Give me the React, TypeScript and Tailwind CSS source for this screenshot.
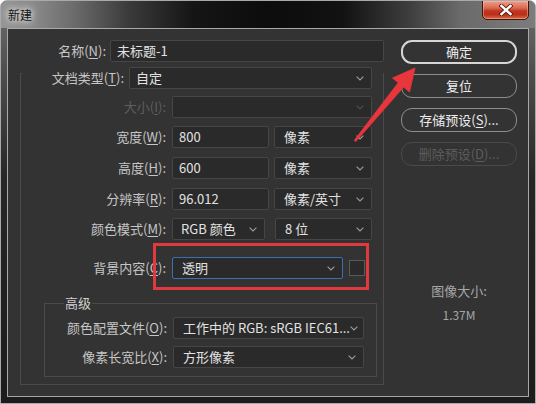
import React from "react";

const Chevron = ({ color = "#9c9c9c" }: { color?: string }) => (
  <svg width="8" height="5" viewBox="0 0 8 5" className="shrink-0">
    <path d="M0.6 0.6 L4 4 L7.4 0.6" fill="none" stroke={color} strokeWidth="1.1" />
  </svg>
);

function Field({
  className = "",
  children,
  chevron = false,
  disabled = false,
  blue = false,
}: {
  className?: string;
  children?: React.ReactNode;
  chevron?: boolean;
  disabled?: boolean;
  blue?: boolean;
}) {
  return (
    <div
      className={
        "h-[22px] shrink-0 flex items-center justify-between rounded-[2px] border bg-[#2a2a2a] pl-[6px] pr-[7px] leading-[20px] whitespace-nowrap overflow-hidden " +
        (blue ? "border-[#3a6fb0] " : "border-[#464646] ") +
        (disabled ? "text-[#5c5c5c] " : "text-[#e2e2e2] ") +
        className
      }
    >
      <span>{children}</span>
      {chevron && <Chevron color={disabled ? "#4e4e4e" : "#9c9c9c"} />}
    </div>
  );
}

function Label({ className = "", children, disabled = false }: { className?: string; children: React.ReactNode; disabled?: boolean }) {
  return (
    <div
      className={
        "shrink-0 text-right whitespace-nowrap leading-[22px] " +
        (disabled ? "text-[#5e5e5e] " : "text-[#c6c6c6] ") +
        className
      }
    >
      {children}
    </div>
  );
}

const U = ({ children }: { children: React.ReactNode }) => <span className="underline underline-offset-2">{children}</span>;

function Btn({ children, primary = false, disabled = false }: { children: React.ReactNode; primary?: boolean; disabled?: boolean }) {
  return (
    <div
      className={
        "w-[116px] h-[24px] rounded-[11px] flex items-center justify-center leading-[20px] " +
        (primary
          ? "border-[2px] border-[#d6d6d6] text-[#ececec] "
          : disabled
          ? "border-[1.5px] border-[#4a4a4a] text-[#5c5c5c] "
          : "border-[1.5px] border-[#8e8e8e] text-[#ececec] ")
      }
    >
      {children}
    </div>
  );
}

export default function App() {
  return (
    <div className="relative w-[536px] h-[404px] bg-white font-['Noto_Sans_CJK_SC','Noto_Sans',sans-serif] text-[13px] overflow-hidden">
      <div className="w-full h-full flex flex-col rounded-t-[7px] border border-[#a9a9a9] overflow-hidden bg-[linear-gradient(180deg,#6e6e6e_0%,#4a4a4a_20%,#262626_45%,#1c1c1c_100%)]">
        {/* title bar */}
        <div className="relative h-[27px] shrink-0 flex items-center pl-[7px] bg-[linear-gradient(90deg,#959595_0%,#8a8a8a_6%,#6a6a6a_14%,#3a3a3a_24%,#151515_36%,#0c0c0c_50%,#121212_64%,#3c3c3c_76%,#6a6a6a_86%,#7c7c7c_100%)]">
          <span className="text-[12px] text-[#111] leading-[16px] mt-[1px] [text-shadow:0_0_6px_#fff,0_0_10px_#ddd]">新建</span>
          <div className="absolute right-[6px] top-[-1px] w-[47px] h-[20px] rounded-b-[5px] border border-[#4a1208] bg-[linear-gradient(180deg,#eaa08c_0%,#d8684e_40%,#c2341c_55%,#b8301a_75%,#d86a48_100%)] shadow-[inset_0_0_0_1px_rgba(255,200,180,0.45)] flex items-center justify-center">
            <svg width="14" height="12" viewBox="0 0 14 12">
              <path d="M2.5 2 L11.5 10 M11.5 2 L2.5 10" stroke="#5a1a0e" strokeWidth="4.2" strokeLinecap="square" />
              <path d="M2.5 2 L11.5 10 M11.5 2 L2.5 10" stroke="#ffffff" strokeWidth="2.4" strokeLinecap="square" />
            </svg>
          </div>
        </div>
        {/* body */}
        <div className="flex-1 flex px-[6px] pb-[6px]">
          <div className="flex-1 flex border border-[#a8a8a8] bg-[#333333]">
            {/* left column */}
            <div className="flex flex-col w-[376px] pl-[12px]">
              <div className="mt-[11px] flex items-center">
                <Label className="w-[90px] pr-[4px]">
                  名称(<U>N</U>):
                </Label>
                <Field className="w-[274px]">未标题-1</Field>
              </div>

              <div className="mt-[11px] w-[364px] h-[312px] border border-[#4a4a4a] flex flex-col">
                {/* doc type row (legend) */}
                <div className="-mt-[7px] ml-[1px] flex items-center bg-[#333333]">
                  <Label className="w-[107px] pr-[5px]">
                    文档类型(<U>T</U>):
                  </Label>
                  <Field className="w-[243px]" chevron>
                    自定
                  </Field>
                </div>

                <div className="mt-[7px] flex items-center">
                  <Label className="w-[151px] pr-[6px]" disabled>
                    大小(<U>I</U>):
                  </Label>
                  <Field className="w-[200px]" chevron disabled></Field>
                </div>

                <div className="mt-[8px] flex items-center">
                  <Label className="w-[151px] pr-[6px]">
                    宽度(<U>W</U>):
                  </Label>
                  <Field className="w-[97px] pl-[4px]">800</Field>
                  <Field className="ml-[5px] w-[98px] pl-[9px]" chevron>
                    像素
                  </Field>
                </div>

                <div className="mt-[9px] flex items-center">
                  <Label className="w-[151px] pr-[6px]">
                    高度(<U>H</U>):
                  </Label>
                  <Field className="w-[97px] pl-[4px]">600</Field>
                  <Field className="ml-[5px] w-[98px] pl-[9px]" chevron>
                    像素
                  </Field>
                </div>

                <div className="mt-[9px] flex items-center">
                  <Label className="w-[151px] pr-[6px]">
                    分辨率(<U>R</U>):
                  </Label>
                  <Field className="w-[97px] pl-[4px]">96.012</Field>
                  <Field className="ml-[5px] w-[98px] pl-[9px]" chevron>
                    像素/英寸
                  </Field>
                </div>

                <div className="mt-[8px] flex items-center">
                  <Label className="w-[151px] pr-[6px]">
                    颜色模式(<U>M</U>):
                  </Label>
                  <Field className="w-[93px] pl-[8px]" chevron>
                    RGB 颜色
                  </Field>
                  <Field className="ml-[10px] w-[97px] pl-[9px]" chevron>
                    8 位
                  </Field>
                </div>

                <div className="mt-[17px] flex items-center">
                  <Label className="w-[151px] pr-[6px]">
                    背景内容(<U>C</U>):
                  </Label>
                  <Field className="w-[171px] pl-[9px]" chevron blue>
                    透明
                  </Field>
                  <div className="ml-[6px] w-[16px] h-[16px] border border-[#5a5a5a] bg-[#2a2a2a]" />
                </div>

                {/* advanced */}
                <div className="mt-[24px] ml-[23px] w-[333px] h-[74px] border border-[#4a4a4a] flex flex-col">
                  <div className="self-start -mt-[8px] ml-[19px] px-[1px] bg-[#333333] text-[#d0d0d0] leading-[14px]">高级</div>
                  <div className="mt-[7px] flex items-center">
                    <Label className="w-[128px] pr-[6px]">
                      颜色配置文件(<U>O</U>):
                    </Label>
                    <Field className="w-[191px] pl-[9px]" chevron>
                      工作中的 RGB: sRGB IEC61...
                    </Field>
                  </div>
                  <div className="mt-[7px] flex items-center">
                    <Label className="w-[128px] pr-[6px]">
                      像素长宽比(<U>X</U>):
                    </Label>
                    <Field className="w-[191px] pl-[9px]" chevron>
                      方形像素
                    </Field>
                  </div>
                </div>
              </div>
            </div>

            {/* right column */}
            <div className="flex-1 flex flex-col pl-[17px] pt-[11px]">
              <div className="flex flex-col gap-[10px]">
                <Btn primary>确定</Btn>
                <Btn>复位</Btn>
                <Btn>
                  存储预设(<U>S</U>)...
                </Btn>
                <Btn disabled>
                  删除预设(<U>D</U>)...
                </Btn>
              </div>
              <div className="w-[116px] mt-[117px] text-center text-[#a6a6a6] leading-[16px]">图像大小:</div>
              <div className="w-[116px] mt-[8px] text-center text-[#a6a6a6] leading-[16px] text-[12px]">1.37M</div>
            </div>
          </div>
        </div>
      </div>

      {/* red annotation box */}
      <div className="absolute left-[153px] top-[243px] w-[216px] h-[47px] border-[3px] border-[#e03a3e] pointer-events-none" />
      {/* red arrow */}
      <svg className="absolute left-0 top-0 pointer-events-none" width="536" height="404" viewBox="0 0 536 404">
        <polygon
          points="354.2,140.4 398.2,82.7 392.5,78 415,68 409.5,92 403.6,87.1 355.8,141.6"
          fill="#e8363c"
          stroke="#e8363c"
          strokeWidth="0.8"
          strokeLinejoin="round"
        />
      </svg>
    </div>
  );
}
